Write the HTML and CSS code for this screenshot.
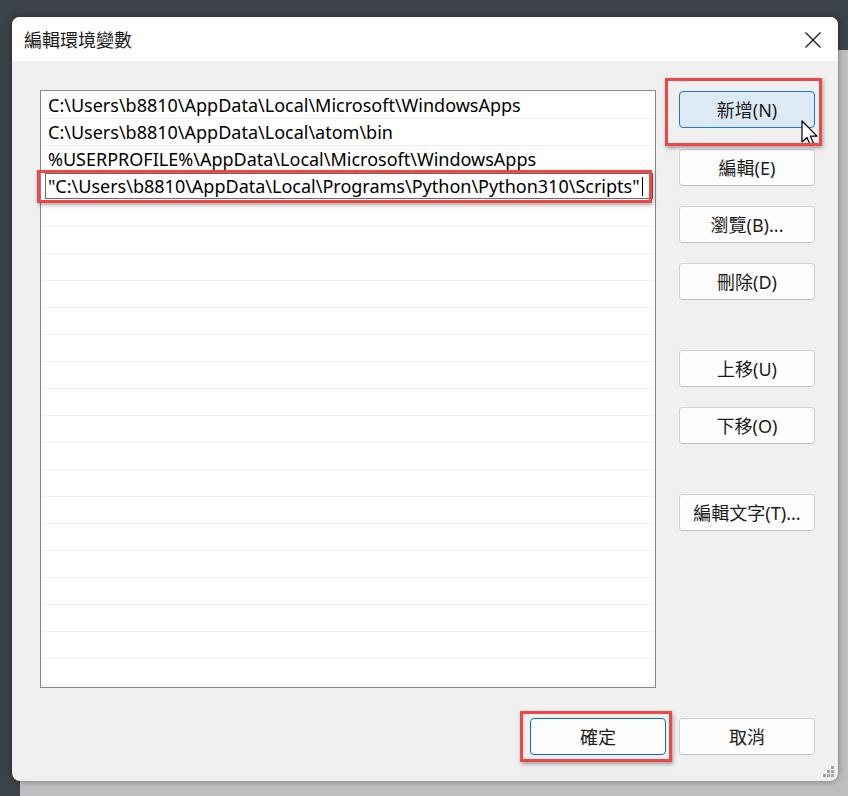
FILE: index.html
```html
<!DOCTYPE html>
<html lang="zh-Hant">
<head>
<meta charset="utf-8">
<title>編輯環境變數</title>
<link rel="stylesheet" href="styles.css">
</head>
<body>
<div class="desktop">
  <div class="backwin"></div>

  <div class="dialog">
    <div class="titlebar">
      <span class="title">編輯環境變數</span>
      <span class="close" aria-label="關閉">
        <svg width="16" height="16" viewBox="0 0 16 16"><path d="M0.5 0.5 L15.5 15.5 M15.5 0.5 L0.5 15.5" stroke="#1a1a1a" stroke-width="1.3" fill="none"/></svg>
      </span>
    </div>

    <div class="body">
      <div class="main">
        <div class="listbox">
          <div class="row">C:\Users\b8810\AppData\Local\Microsoft\WindowsApps</div>
          <div class="row">C:\Users\b8810\AppData\Local\atom\bin</div>
          <div class="row">%USERPROFILE%\AppData\Local\Microsoft\WindowsApps</div>
          <div class="row editing"><span class="edit">"C:\Users\b8810\AppData\Local\Programs\Python\Python310\Scripts"<span class="caret"></span></span></div>
          <div class="row"></div>
          <div class="row"></div>
          <div class="row"></div>
          <div class="row"></div>
          <div class="row"></div>
          <div class="row"></div>
          <div class="row"></div>
          <div class="row"></div>
          <div class="row"></div>
          <div class="row"></div>
          <div class="row"></div>
          <div class="row"></div>
          <div class="row"></div>
          <div class="row"></div>
          <div class="row"></div>
          <div class="row"></div>
          <div class="row"></div>
          <div class="row"></div>
        </div>

        <div class="side">
          <button class="btn hover first">新增(N)</button>
          <button class="btn">編輯(E)</button>
          <button class="btn">瀏覽(B)...</button>
          <button class="btn">刪除(D)</button>
          <button class="btn spaced">上移(U)</button>
          <button class="btn">下移(O)</button>
          <button class="btn spaced">編輯文字(T)...</button>
        </div>
      </div>

      <div class="footer">
        <button class="btn default">確定</button>
        <button class="btn">取消</button>
      </div>
    </div>

    <svg class="pointer" width="20" height="28" viewBox="0 0 20 28">
      <path d="M1 1 L1 22 L6 17.5 L9.5 25.5 L12.8 24 L9.4 16.2 L16 16.2 Z" fill="#fff" stroke="#000" stroke-width="1.2" stroke-linejoin="round"/>
    </svg>

    <div class="mark mark-edit"></div>
    <div class="mark mark-new"></div>
    <div class="mark mark-ok"></div>

    <svg class="grip" width="12" height="12" viewBox="0 0 12 12">
      <g fill="#a6a6a6">
        <rect x="8" y="0" width="3" height="3"/>
        <rect x="4" y="4" width="3" height="3"/>
        <rect x="8" y="4" width="3" height="3"/>
        <rect x="0" y="8" width="3" height="3"/>
        <rect x="4" y="8" width="3" height="3"/>
        <rect x="8" y="8" width="3" height="3"/>
      </g>
    </svg>
  </div>
</div>
</body>
</html>
```

FILE: styles.css
```css
html, body {
  margin: 0;
  padding: 0;
}

body {
  width: 848px;
  height: 796px;
  overflow: hidden;
  background: #3b4248;
  font-family: "Noto Sans", "Noto Sans CJK TC", sans-serif;
  color: #000;
}

.desktop {
  position: relative;
  width: 848px;
  height: 796px;
}

/* parent window peeking out behind the dialog */
.backwin {
  position: absolute;
  left: 20px;
  top: 50px;
  right: -20px;
  bottom: -20px;
  background: #bebebe;
}

.dialog {
  position: absolute;
  left: 12px;
  top: 17px;
  width: 826px;
  height: 764px;
  border-radius: 8px;
  overflow: hidden;
  background: #f0f0f0;
  box-shadow: 0 0 6px rgba(0, 0, 0, 0.4);
  display: flex;
  flex-direction: column;
}

.titlebar {
  height: 44px;
  flex: none;
  background: #fff;
  display: flex;
  align-items: center;
  justify-content: space-between;
  padding: 0 17px 0 12px;
}

.title {
  font-family: "Noto Sans CJK TC", sans-serif;
  font-size: 18px;
  color: #1a1a1a;
  line-height: 1;
}

.close {
  display: flex;
  width: 16px;
  height: 16px;
  margin-top: 1px;
}

.body {
  flex: 1;
  padding: 29px 23px 0 28px;
  display: flex;
  flex-direction: column;
}

.main {
  display: flex;
  align-items: flex-start;
}

.listbox {
  width: 616px;
  height: 598px;
  box-sizing: border-box;
  border: 1px solid #83868f;
  background: #fff;
  padding-top: 1px;
  overflow: hidden;
}

.row {
  height: 27px;
  box-sizing: border-box;
  border-bottom: 1px solid #efefef;
  padding-left: 7px;
  font-size: 18px;
  line-height: 26px;
  white-space: nowrap;
  color: #000;
}

.row.editing {
  padding-left: 4px;
  border-bottom: none;
}

.edit {
  display: flex;
  align-items: center;
  width: 608px;
  height: 26px;
  box-sizing: border-box;
  border: 1px solid #6d6d6d;
  padding-left: 2px;
  line-height: 24px;
}

.caret {
  display: inline-block;
  width: 1px;
  height: 19px;
  background: #000;
  margin-left: 2px;
}

.side {
  width: 136px;
  margin-left: 23px;
  padding-top: 1px;
  display: flex;
  flex-direction: column;
  gap: 20px;
}

.btn {
  width: 136px;
  height: 37px;
  box-sizing: border-box;
  border: 1px solid #d1d1d1;
  border-bottom-color: #c2c2c2;
  border-radius: 4px;
  background: #fdfdfd;
  font-family: "Noto Sans", "Noto Sans CJK TC", sans-serif;
  font-size: 18px;
  color: #1b1b1b;
  padding: 0;
  line-height: 1;
}

.btn.first {
  margin-bottom: 1px;
}

.btn.spaced {
  margin-top: 30px;
}

.btn.hover {
  background: #dde9f5;
  border-color: #1b79cf;
}

.btn.default {
  border-color: #1466c4;
}

.footer {
  margin-top: 30px;
  display: flex;
  justify-content: flex-end;
  gap: 13px;
}

/* red annotation frames */
.mark {
  position: absolute;
  box-sizing: border-box;
  border: 3px solid #f24646;
  box-shadow: 1px 2px 4px rgba(0, 0, 0, 0.35);
}

.mark-edit {
  left: 25px;
  top: 153px;
  width: 615px;
  height: 33px;
}

.mark-new {
  left: 653px;
  top: 61px;
  width: 157px;
  height: 68px;
}

.mark-ok {
  left: 508px;
  top: 694px;
  width: 152px;
  height: 51px;
}

.pointer {
  position: absolute;
  left: 789px;
  top: 103px;
}

.grip {
  position: absolute;
  right: 3px;
  bottom: 3px;
}
```
